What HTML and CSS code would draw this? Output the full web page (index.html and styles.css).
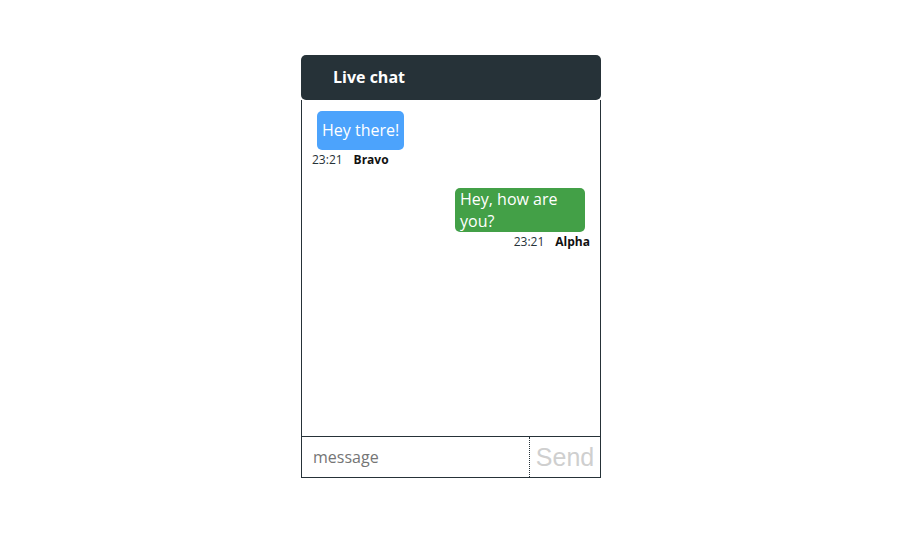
FILE: index.html
```html
<!DOCTYPE html>
<html>
<head>
<meta charset="utf-8">
<link rel="stylesheet" href="styles.css">
</head>
<body>
<div class="chat">
  <div class="chat-header">Live chat</div>
  <div class="chat-body">
    <div class="messages">
      <div class="msg msg-in">
        <div class="bubble bubble-blue">Hey there!</div>
        <div class="meta"><span class="time">23:21</span><span class="name">Bravo</span></div>
      </div>
      <div class="msg msg-out">
        <div class="bubble bubble-green">Hey, how are you?</div>
        <div class="meta"><span class="time">23:21</span><span class="name">Alpha</span></div>
      </div>
    </div>
    <div class="composer">
      <input class="input" type="text" placeholder="message">
      <button class="send">Send</button>
    </div>
  </div>
</div>
</body>
</html>
```
FILE: styles.css
```css
html, body {
  margin: 0;
  padding: 0;
  background: #fff;
}
body {
  font-family: "Open Sans", sans-serif;
}
.chat {
  width: 300px;
  margin: 55px 0 0 301px;
}
.chat-header {
  height: 45px;
  background: #263238;
  color: #fff;
  border-radius: 5px;
  font-weight: 700;
  font-size: 16px;
  line-height: 45px;
  padding-left: 32px;
  box-sizing: border-box;
}
.chat-body {
  border: 1px solid #263238;
  border-top: 0;
  display: flex;
  flex-direction: column;
  height: 378px;
  box-sizing: border-box;
}
.messages {
  flex: 1;
  display: flex;
  flex-direction: column;
  padding: 11px 10px 0 10px;
}
.msg {
  display: flex;
  flex-direction: column;
}
.msg-in {
  align-items: flex-start;
}
.msg-out {
  align-items: flex-end;
  margin-top: 20px;
}
.bubble {
  color: #fff;
  font-size: 16px;
  border-radius: 5px;
  box-sizing: border-box;
}
.bubble-blue {
  background: #4ca3fc;
  padding: 8px 5px 9px 5px;
  line-height: 22px;
  margin-left: 5px;
}
.bubble-green {
  background: #43a047;
  width: 130px;
  padding: 0 5px;
  line-height: 22px;
  margin-right: 5px;
}
.meta {
  display: flex;
  gap: 11px;
  font-size: 12px;
  line-height: 16px;
  margin-top: 2px;
  color: #263238;
}
.name {
  font-weight: 700;
  color: #111;
}
.composer {
  display: flex;
  height: 41px;
  border-top: 1px solid #263238;
  box-sizing: border-box;
}
.input {
  flex: 1;
  min-width: 0;
  border: 0;
  outline: none;
  padding: 0 0 0 11px;
  font-family: "Open Sans", sans-serif;
  font-size: 16px;
  color: #333;
  background: transparent;
}
.input::placeholder {
  color: #757575;
}
.send {
  width: 71px;
  border: 0;
  border-left: 1px dotted #263238;
  background: #fff;
  color: #cfcfcf;
  font-family: "Liberation Sans", Arial, sans-serif;
  font-size: 25px;
  padding: 0;
  text-align: center;
}
```
